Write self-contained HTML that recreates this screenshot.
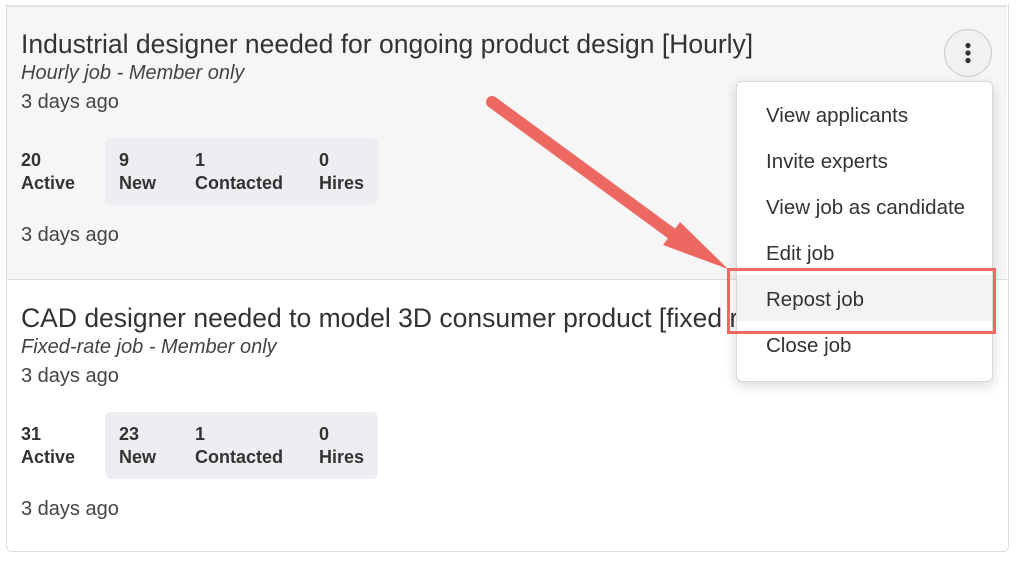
<!DOCTYPE html>
<html><head><style>
body{margin:0;width:1024px;height:570px;background:#fff;font-family:"Liberation Sans",sans-serif;color:#333;position:relative;overflow:hidden}
.outer{position:absolute;left:6px;top:4px;width:1001px;height:547px;border:1px solid #ddd;border-top:none;border-radius:0 0 6px 6px}
.c1{position:absolute;left:7px;top:5px;width:1000px;height:272px;background:#f6f6f6;border-top:2px solid #e2e2e2;border-bottom:1px solid #ddd}
.t{position:absolute;left:21px;font-size:26.5px;color:#333;white-space:nowrap}
.s{position:absolute;left:21px;font-size:20px;font-style:italic;color:#444}
.d{position:absolute;left:21px;font-size:20px;color:#444}
.box{position:absolute;left:105px;width:273px;height:67px;background:#eceef1;border-radius:6px}
.st{position:absolute;font-size:18px;font-weight:bold;color:#333;line-height:23px}
.menu{position:absolute;left:736px;top:81px;width:255px;height:299px;background:#fff;border:1px solid #d8d8d8;border-radius:6px;box-shadow:0 4px 12px rgba(0,0,0,.15)}
.mi{position:absolute;left:29px;font-size:20.5px;color:#333}
.dots{position:absolute;left:944px;top:29px;width:46px;height:46px;border:1px solid #ccc;border-radius:50%;background:#f1f1f1}
</style></head><body>
<div class="outer"></div>
<div class="c1"></div>
<div class="t" style="top:29px">Industrial designer needed for ongoing product design [Hourly]</div>
<div class="s" style="top:62px">Hourly job - Member only</div>
<div class="d" style="top:91px">3 days ago</div>
<div class="box" style="top:138px"></div>
<div class="st" style="left:21px;top:149px">20<br>Active</div>
<div class="st" style="left:119px;top:149px">9<br>New</div>
<div class="st" style="left:195px;top:149px">1<br>Contacted</div>
<div class="st" style="left:319px;top:149px">0<br>Hires</div>
<div class="d" style="top:224px">3 days ago</div>
<div class="t" style="top:303px">CAD designer needed to model 3D consumer product [fixed rate]</div>
<div class="s" style="top:336px">Fixed-rate job - Member only</div>
<div class="d" style="top:365px">3 days ago</div>
<div class="box" style="top:412px"></div>
<div class="st" style="left:21px;top:423px">31<br>Active</div>
<div class="st" style="left:119px;top:423px">23<br>New</div>
<div class="st" style="left:195px;top:423px">1<br>Contacted</div>
<div class="st" style="left:319px;top:423px">0<br>Hires</div>
<div class="d" style="top:498px">3 days ago</div>
<div class="dots"><svg width="46" height="46"><circle cx="23" cy="15.5" r="2.6" fill="#333"/><circle cx="23" cy="23" r="2.6" fill="#333"/><circle cx="23" cy="30.5" r="2.6" fill="#333"/></svg></div>
<div class="menu">
<div style="position:absolute;left:0;top:193px;width:255px;height:46px;background:#f3f3f3"></div>
<div class="mi" style="top:22px">View applicants</div>
<div class="mi" style="top:68px">Invite experts</div>
<div class="mi" style="top:114px">View job as candidate</div>
<div class="mi" style="top:160px">Edit job</div>
<div class="mi" style="top:206px">Repost job</div>
<div class="mi" style="top:252px">Close job</div>
</div>
<div style="position:absolute;left:727px;top:268px;width:263px;height:60px;border:3px solid #ee6862"></div>
<svg style="position:absolute;left:0;top:0" width="1024" height="570">
<line x1="492" y1="102" x2="675" y2="236" stroke="#ee6862" stroke-width="12" stroke-linecap="round"/>
<polygon points="728,269 663,245 680,222" fill="#ee6862"/>
</svg>
</body></html>
